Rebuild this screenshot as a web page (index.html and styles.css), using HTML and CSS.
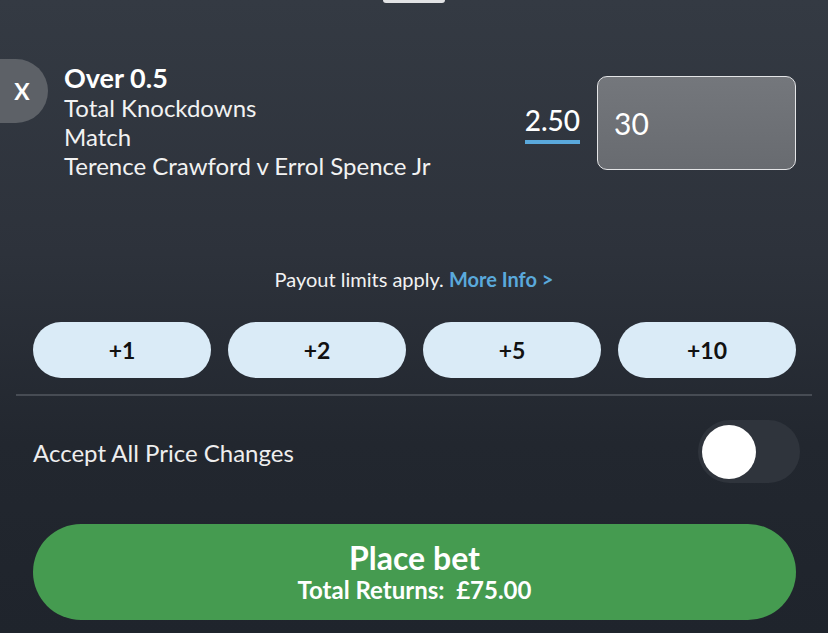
FILE: index.html
```html
<!DOCTYPE html>
<html>
<head>
<meta charset="utf-8">
<link rel="stylesheet" href="styles.css">
</head>
<body>
<div class="sheet">
  <div class="handle"></div>
  <div class="selection">
    <div class="remove">X</div>
    <div class="info">
      <div class="pick">Over 0.5</div>
      <div class="line">Total Knockdowns</div>
      <div class="line">Match</div>
      <div class="line">Terence Crawford v Errol Spence Jr</div>
    </div>
    <div class="odds">2.50</div>
    <div class="stake">30</div>
  </div>
  <div class="payout">Payout limits apply. <span class="more">More Info &gt;</span></div>
  <div class="quick">
    <div class="qbtn">+1</div>
    <div class="qbtn">+2</div>
    <div class="qbtn">+5</div>
    <div class="qbtn">+10</div>
  </div>
  <div class="divider"></div>
  <div class="accept">
    <span class="accept-label">Accept All Price Changes</span>
    <div class="toggle"><div class="knob"></div></div>
  </div>
  <div class="place">
    <div class="place-title">Place bet</div>
    <div class="place-sub">Total Returns:&nbsp; £75.00</div>
  </div>
</div>
</body>
</html>
```
FILE: styles.css
```css
html, body {
  margin: 0;
  padding: 0;
  background: #20252d;
}
.sheet {
  width: 828px;
  height: 633px;
  overflow: hidden;
  background: linear-gradient(180deg, #343a43 0%, #2d323b 40%, #22272f 70%, #1f242c 100%);
  font-family: Lato, "Open Sans", sans-serif;
  color: #fff;
}
.handle {
  width: 62px;
  height: 3px;
  margin: 0 auto;
  background: #e2e3e5;
  border-radius: 0 0 4px 4px;
}
.selection {
  display: flex;
  align-items: flex-start;
  margin-top: 56px;
  padding-right: 32px;
}
.remove {
  width: 48px;
  height: 64px;
  background: #5d6167;
  border-radius: 0 32px 32px 0;
  display: flex;
  align-items: center;
  justify-content: center;
  padding-right: 4px;
  box-sizing: border-box;
  font-size: 23px;
  font-weight: 700;
  color: #fff;
}
.info {
  margin-left: 16px;
  margin-top: 3px;
}
.pick {
  font-size: 27px;
  font-weight: 700;
  line-height: 31px;
}
.line {
  font-size: 24px;
  line-height: 29px;
  color: #f2f2f2;
}
.odds {
  margin-left: auto;
  margin-top: 46px;
  font-size: 28px;
  line-height: 30px;
  font-weight: 500;
  color: #fff;
  padding-bottom: 5px;
  border-bottom: 4px solid #5aa9dc;
}
.stake {
  margin-left: 17px;
  margin-top: 17px;
  width: 199px;
  height: 94px;
  box-sizing: border-box;
  border: 1px solid #e4e5e7;
  border-radius: 10px;
  background: linear-gradient(180deg, #74777c, #686b70);
  font-size: 30px;
  padding-left: 16px;
  display: flex;
  align-items: center;
  color: #fff;
}
.payout {
  margin-top: 87px;
  text-align: center;
  font-size: 20px;
  line-height: 24px;
  color: #f2f2f2;
}
.more {
  color: #5aa9dc;
  font-weight: 700;
}
.quick {
  display: grid;
  grid-template-columns: repeat(4, 178px);
  gap: 17px;
  padding: 0 32px 0 33px;
  margin-top: 31px;
}
.qbtn {
  height: 56px;
  border-radius: 28px;
  background: #daebf7;
  color: #111;
  font-size: 23px;
  font-weight: 700;
  display: flex;
  align-items: center;
  justify-content: center;
}
.divider {
  height: 2px;
  background: #474c54;
  margin: 16px 16px 0 16px;
}
.accept {
  display: flex;
  align-items: center;
  justify-content: space-between;
  padding: 0 28px 0 33px;
  margin-top: 24px;
}
.accept-label {
  font-size: 24px;
  color: #eeeeee;
  padding-top: 2px;
}
.toggle {
  width: 102px;
  height: 63px;
  border-radius: 32px;
  background: #2f343c;
  display: flex;
  align-items: center;
  padding-left: 4px;
  box-sizing: border-box;
}
.knob {
  width: 54px;
  height: 54px;
  border-radius: 50%;
  background: #ffffff;
}
.place {
  margin: 41px 32px 0 33px;
  height: 96px;
  border-radius: 48px;
  background: #459b50;
  display: flex;
  flex-direction: column;
  align-items: center;
  justify-content: center;
}
.place-title {
  font-size: 32px;
  font-weight: 700;
  line-height: 36px;
}
.place-sub {
  font-size: 24px;
  font-weight: 700;
  line-height: 28px;
}
```
